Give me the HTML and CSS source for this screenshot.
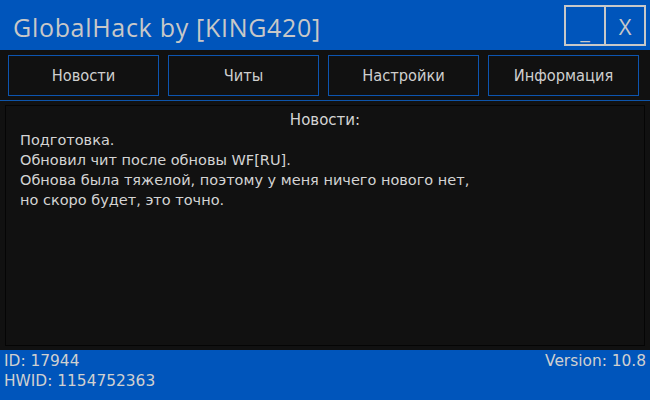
FILE: index.html
```html
<!DOCTYPE html>
<html lang="ru">
<head>
<meta charset="utf-8">
<title>GlobalHack</title>
<link rel="stylesheet" href="styles.css">
</head>
<body>
<div class="app">
  <header class="titlebar">
    <div class="title">GlobalHack by [KING420]</div>
    <div class="winbtns">
      <div class="winbtn min">_</div>
      <div class="winbtn close">X</div>
    </div>
  </header>
  <nav class="tabs">
    <div class="tab">Новости</div>
    <div class="tab">Читы</div>
    <div class="tab">Настройки</div>
    <div class="tab">Информация</div>
  </nav>
  <div class="divider"></div>
  <main class="panel">
    <div class="panel-title">Новости:</div>
    <div class="news">
      <div>Подготовка.</div>
      <div>Обновил чит после обновы WF[RU].</div>
      <div>Обнова была тяжелой, поэтому у меня ничего нового нет,</div>
      <div>но скоро будет, это точно.</div>
    </div>
  </main>
  <footer class="footer">
    <div class="footer-left">
      <div>ID: 17944</div>
      <div>HWID: 1154752363</div>
    </div>
    <div class="footer-right">Version: 10.8</div>
  </footer>
</div>
</body>
</html>
```
FILE: styles.css
```css
* { box-sizing: border-box; }
html, body { margin: 0; padding: 0; }
body {
  width: 650px;
  height: 400px;
  overflow: hidden;
  background: #111111;
  font-family: "DejaVu Sans", Tahoma, sans-serif;
  color: #d4d4d4;
}
.app {
  display: flex;
  flex-direction: column;
  height: 400px;
}
.titlebar {
  height: 50px;
  background: #0055bb;
  display: flex;
  align-items: flex-start;
  justify-content: space-between;
  flex-shrink: 0;
}
.title {
  font-family: "Open Sans", "Liberation Sans", sans-serif;
  font-size: 25px;
  letter-spacing: 0.7px;
  color: #c8c8c8;
  padding: 11px 0 0 13px;
  line-height: 32px;
}
.winbtns {
  display: flex;
  margin: 5px 4px 0 0;
}
.winbtn {
  width: 41px;
  height: 41px;
  border: 2px solid #c8c8c8;
  display: flex;
  align-items: center;
  justify-content: center;
  color: #c8c8c8;
  font-family: "Open Sans", "Liberation Sans", sans-serif;
  font-size: 22px;
}
.winbtn.min { border-right-width: 1px; padding-top: 8px; }
.winbtn.close { border-left-width: 1px; }
.tabs {
  display: flex;
  gap: 9px;
  padding: 5px 11px 0 8px;
  height: 46px;
  flex-shrink: 0;
}
.tab {
  flex: 1;
  height: 41px;
  border: 1px solid #0d55b0;
  background: #111111;
  display: flex;
  align-items: center;
  justify-content: center;
  font-family: "DejaVu Sans Condensed", "DejaVu Sans", sans-serif;
  font-stretch: condensed;
  font-size: 16.3px;
  color: #cfcfcf;
}
.divider {
  margin-top: 4px;
  height: 1px;
  background: #0e55aa;
  flex-shrink: 0;
}
.panel {
  margin: 4px 5px 4px 5px;
  border: 1px solid #050505;
  flex: 1;
  padding: 4px 14px;
}
.panel-title {
  text-align: center;
  font-size: 15px;
  line-height: 20px;
  height: 20px;
}
.news {
  font-size: 14.5px;
  line-height: 20px;
}
.footer {
  height: 50px;
  background: #0055bb;
  display: flex;
  justify-content: space-between;
  padding: 1px 4px 0 4px;
  font-size: 15.4px;
  line-height: 20px;
  color: #d0d0d0;
  flex-shrink: 0;
}
```
